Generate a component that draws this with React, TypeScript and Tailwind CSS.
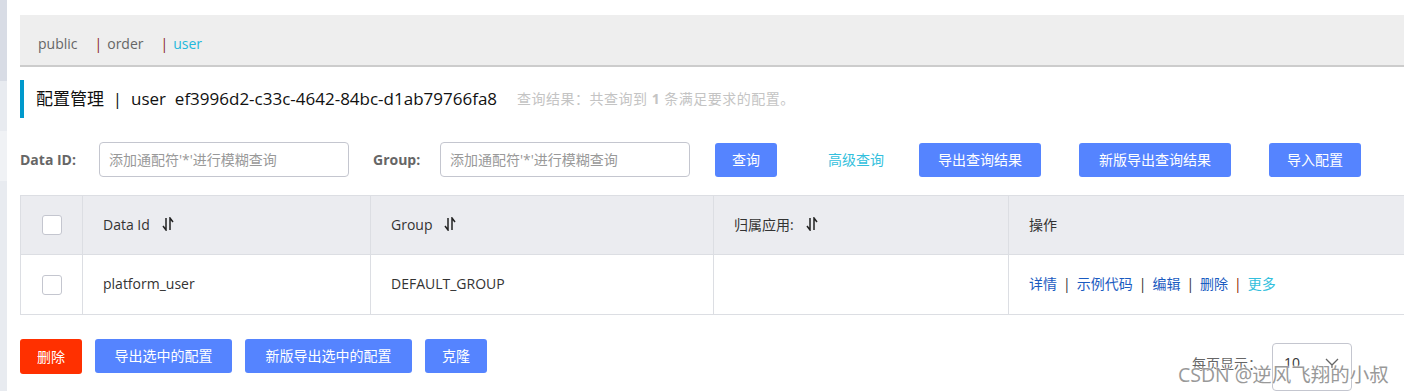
const font = { fontFamily: '"Open Sans", "Noto Sans CJK SC", sans-serif' }

function SortIcon() {
  return (
    <svg width="12" height="14" viewBox="0 0 12 14" className="inline-block ml-3 -mt-0.5 align-middle">
      <path d="M4 1 V13 L1 9" fill="none" stroke="#222" strokeWidth="1.5" />
      <path d="M8 13 V1 L11 5" fill="none" stroke="#222" strokeWidth="1.5" />
    </svg>
  )
}

function Checkbox() {
  return <div className="w-5 h-5 rounded-[3px] border border-[#c4c6cf] bg-white" />
}

function Btn({ children, className = "" }: { children: React.ReactNode; className?: string }) {
  return (
    <button className={"h-[34px] rounded-[3px] bg-[#5584ff] text-white text-sm px-4 " + className}>
      {children}
    </button>
  )
}

export default function App() {
  return (
    <div className="flex w-[1404px] h-[391px] overflow-hidden bg-white" style={font}>
      <div className="w-[7px] flex flex-col shrink-0">
        <div className="h-[81px] bg-[#d8dce5]" />
        <div className="h-[50px] bg-[#e8ebf0]" />
        <div className="h-[50px] bg-[#f0f2f5]" />
        <div className="flex-1 bg-[#e8ebf0]" />
      </div>
      <div className="flex-1 pl-[13px] pt-[15px] min-w-0">
        <div className="h-[52px] bg-[#eeeeee] border-b-2 border-[#cccccc] flex items-center pt-2 pl-[18px] text-sm text-[#666]">
          <span>public</span>
          <span className="ml-[17px] text-[#8b1a1a]">|</span>
          <span className="ml-[5px]">order</span>
          <span className="ml-[17px] text-[#8b1a1a]">|</span>
          <span className="ml-[5px] text-[#22b8dc]">user</span>
        </div>

        <div className="mt-[13px] h-[38px] border-l-4 border-[#0099cc] flex items-center pl-3">
          <span className="text-[17px] text-[#111]">配置管理&nbsp;&nbsp;|&nbsp;&nbsp;user&nbsp;&nbsp;ef3996d2-c33c-4642-84bc-d1ab79766fa8</span>
          <span className="ml-5 text-sm text-[#c4c4c4] tracking-[0.5px]">
            查询结果：共查询到 <b className="font-bold">1</b> 条满足要求的配置。
          </span>
        </div>

        <div className="mt-[24px] flex items-center h-[35px]">
          <span className="text-sm font-bold text-[#666] w-[79px]">Data ID:</span>
          <input
            className="w-[250px] h-[35px] border border-[#c4c6cf] rounded-[4px] px-[9px] text-sm placeholder:text-[#999] outline-none"
            placeholder="添加通配符'*'进行模糊查询"
          />
          <span className="ml-[24px] text-sm font-bold text-[#666] w-[67px]">Group:</span>
          <input
            className="w-[250px] h-[35px] border border-[#c4c6cf] rounded-[4px] px-[9px] text-sm placeholder:text-[#999] outline-none"
            placeholder="添加通配符'*'进行模糊查询"
          />
          <Btn className="ml-[25px] w-[62px] px-0">查询</Btn>
          <span className="ml-[51px] text-sm text-[#33bfdd]">高级查询</span>
          <Btn className="ml-[35px] w-[122px] px-0">导出查询结果</Btn>
          <Btn className="ml-[38px] w-[152px] px-0">新版导出查询结果</Btn>
          <Btn className="ml-[38px] w-[92px] px-0">导入配置</Btn>
        </div>

        <div className="mt-[18px] border border-[#dcdee3] w-[1400px] text-sm text-[#333]">
          <div className="flex h-[59px] bg-[#ebecf0] border-b border-[#dcdee3]">
            <div className="w-[62px] border-r border-[#dcdee3] flex items-center justify-center"><Checkbox /></div>
            <div className="w-[288px] border-r border-[#dcdee3] flex items-center pl-5">Data Id<SortIcon /></div>
            <div className="w-[343px] border-r border-[#dcdee3] flex items-center pl-5">Group<SortIcon /></div>
            <div className="w-[295px] border-r border-[#dcdee3] flex items-center pl-5">归属应用:<SortIcon /></div>
            <div className="flex-1 flex items-center pl-5">操作</div>
          </div>
          <div className="flex h-[59px] bg-white">
            <div className="w-[62px] border-r border-[#dcdee3] flex items-center justify-center"><Checkbox /></div>
            <div className="w-[288px] border-r border-[#dcdee3] flex items-center pl-5 -mt-0.5">platform_user</div>
            <div className="w-[343px] border-r border-[#dcdee3] flex items-center pl-5 -mt-0.5">DEFAULT_GROUP</div>
            <div className="w-[295px] border-r border-[#dcdee3] flex items-center pl-5"></div>
            <div className="flex-1 flex items-center pl-5 -mt-0.5 text-[#1a5bc1]">
              <span>详情</span>
              <span className="mx-[6px] text-[#333]">|</span>
              <span>示例代码</span>
              <span className="mx-[6px] text-[#333]">|</span>
              <span>编辑</span>
              <span className="mx-[6px] text-[#333]">|</span>
              <span>删除</span>
              <span className="mx-[6px] text-[#8b2500]">|</span>
              <span className="text-[#33bfdd]">更多</span>
            </div>
          </div>
        </div>

        <div className="mt-[24px] flex items-start">
          <button className="h-[35px] w-[62px] rounded-[3px] bg-[#ff3000] text-white text-sm">删除</button>
          <Btn className="ml-[13px] w-[137px] px-0">导出选中的配置</Btn>
          <Btn className="ml-[13px] w-[167px] px-0">新版导出选中的配置</Btn>
          <Btn className="ml-[13px] w-[62px] px-0">克隆</Btn>
          <div className="ml-auto mr-[52px] mt-[4px] flex items-start relative">
            <span className="text-sm text-[#666] mt-[11px]">每页显示：</span>
            <div className="ml-[10px] w-[80px] h-[48px] border border-[#c4c6cf] rounded-[4px] flex pt-[9px] pl-[11px] text-sm text-[#333]">
              <span>10</span>
              <svg width="14" height="10" viewBox="0 0 14 10" className="ml-auto mr-[12px] mt-[5px]">
                <path d="M1 1 L7 7 L13 1 M7 7 V10" fill="none" stroke="#666" strokeWidth="1.3" />
              </svg>
            </div>
            <span
              className="absolute left-[-14px] top-[17px] text-[19.5px] text-[#999] whitespace-nowrap"
              style={{ textShadow: "0 0 2px #fff, 0 0 2px #fff" }}
            >
              CSDN @逆风飞翔的小叔
            </span>
          </div>
        </div>
      </div>
    </div>
  )
}
